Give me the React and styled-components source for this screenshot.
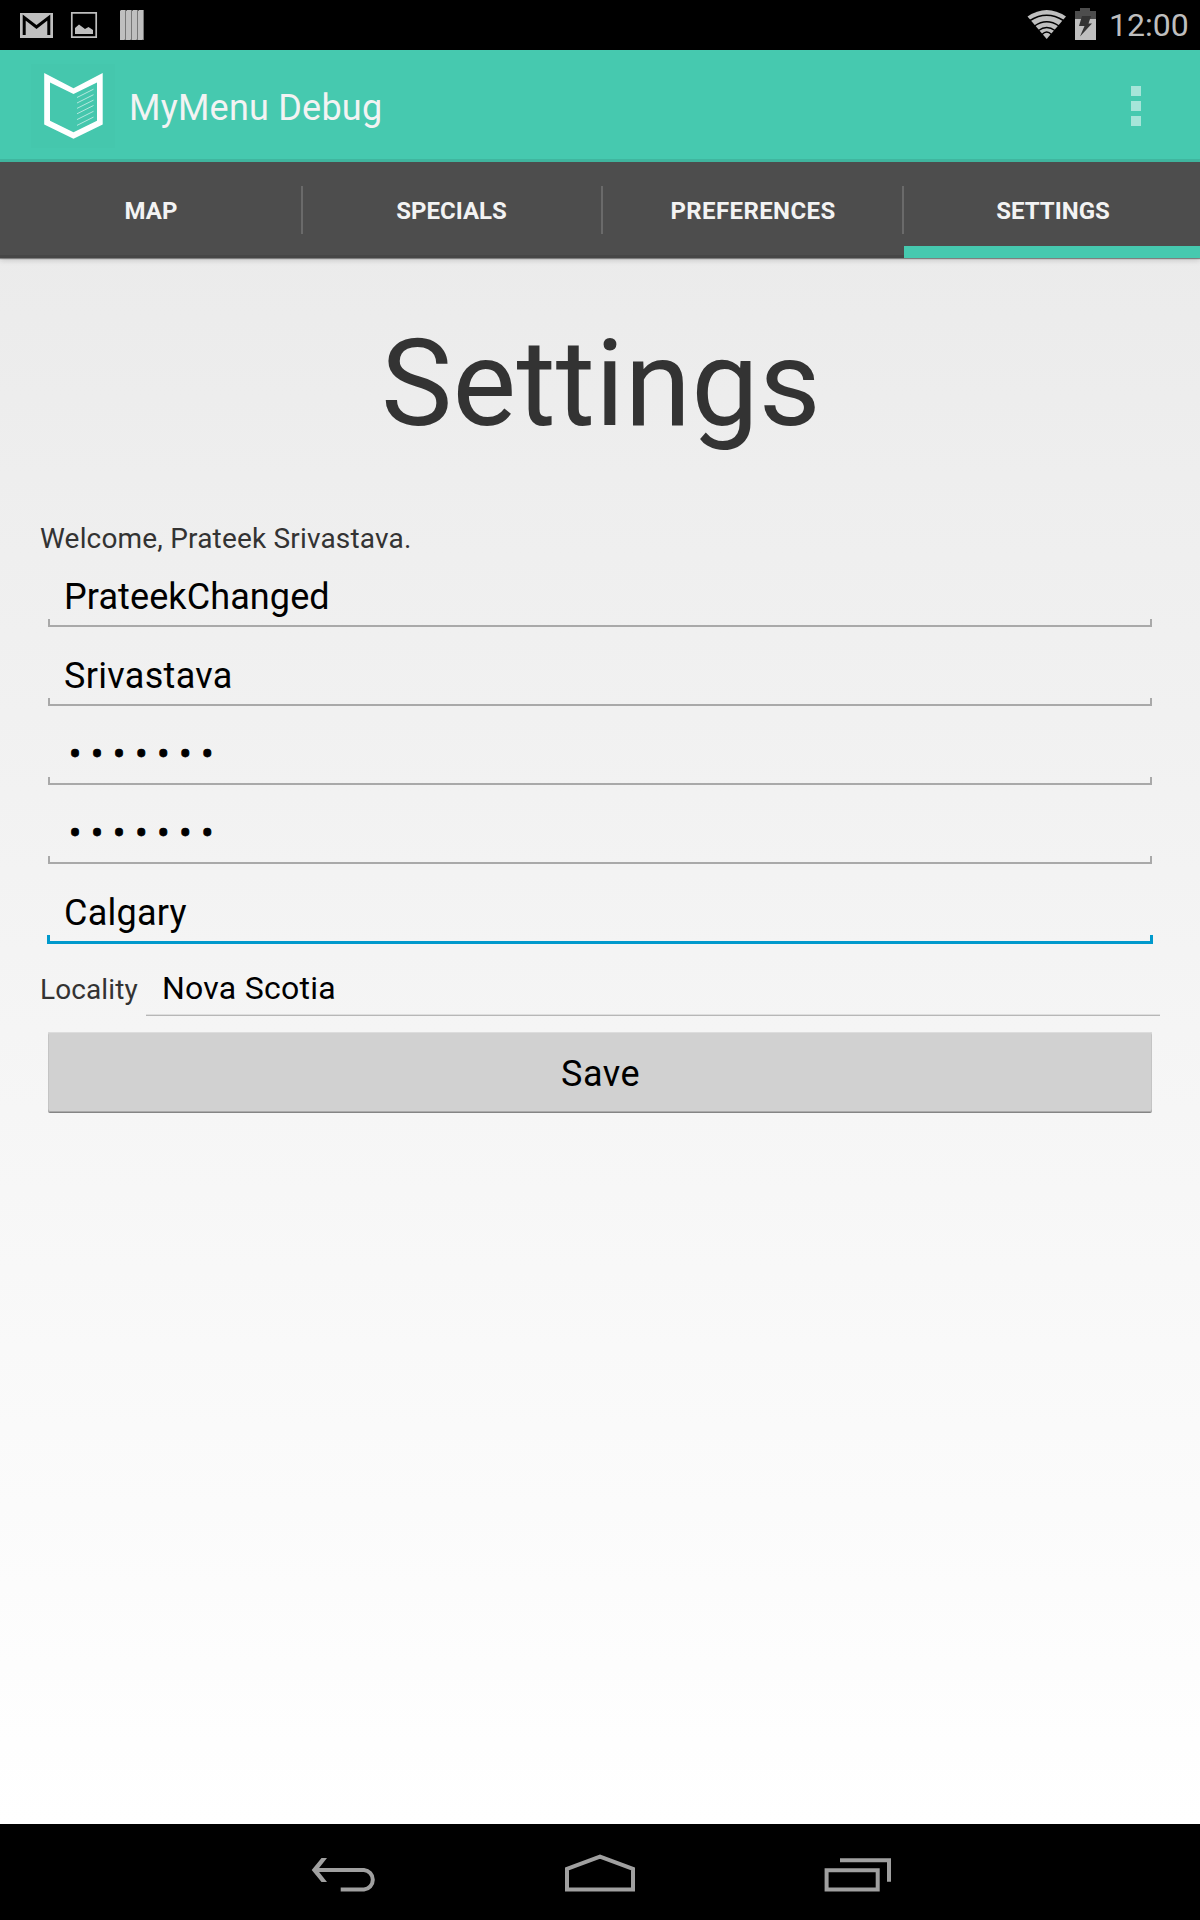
import React from "react";
import styled, { createGlobalStyle } from "styled-components";

const GlobalStyle = createGlobalStyle`
  * { box-sizing: border-box; }
  body { margin: 0; background: #000; }
`;

const Screen = styled.div`
  width: 1200px;
  height: 1920px;
  display: flex;
  flex-direction: column;
  overflow: hidden;
  font-family: Roboto, "Liberation Sans", sans-serif;
`;

const Window = styled.div`
  height: 1824px;
  display: flex;
  flex-direction: column;
  background: linear-gradient(#e8e8e8, #ffffff);
`;

const StatusBar = styled.div`
  flex: none;
  height: 50px;
  display: flex;
  justify-content: space-between;
  background: #000;
`;

const Clock = styled.span`
  width: 92px;
  margin-left: 8px;
  padding-left: 1px;
  font-size: 32px;
  line-height: 51px;
  color: #bebebe;
  white-space: nowrap;
`;

const StatusGroup = styled.div`
  display: flex;
`;

const ActionBar = styled.header`
  flex: none;
  height: 112px;
  display: flex;
  align-items: center;
  padding-left: 31px;
  background: #46c9af;
  border-bottom: 3px solid #40b69f;
`;

const AppLogo = styled.svg`
  flex: none;
  width: 84px;
  height: 84px;
  margin-top: 3px;
`;

const AppTitle = styled.h1`
  flex: 1;
  margin: 7px 0 0 14px;
  font-size: 36px;
  line-height: 42px;
  font-weight: 400;
  letter-spacing: 0.23px;
  color: #f3f3f3;
`;

const Overflow = styled.div`
  display: flex;
  flex-direction: column;
  gap: 5px;
  margin: 3px 59px 0 0;
`;

const Dot = styled.i`
  width: 10px;
  height: 10px;
  background: #a6e5d9;
`;

const Tabs = styled.nav`
  flex: none;
  position: relative;
  height: 96px;
  display: grid;
  grid-template-columns: 301px 301px 302px 296px;
  background: #4d4d4d;
  box-shadow: 0 1px 1px rgba(0, 0, 0, 0.4), 0 3px 5px rgba(0, 0, 0, 0.13);
`;

const Tab = styled.div`
  display: flex;
  align-items: center;
  justify-content: center;
  padding-left: ${(p) => p.$shift || 0}px;
  font-size: 24px;
  font-weight: 700;
  letter-spacing: ${(p) => p.$tracking || 0}px;
  color: #f3f3f3;
  white-space: nowrap;
  border-bottom: ${(p) => (p.$active ? "12px solid #46c9af" : "3px solid #464646")};
  padding-top: ${(p) => (p.$active ? 14 : 5)}px;
`;

const Divider = styled.i`
  position: absolute;
  top: 24px;
  left: ${(p) => p.$x}px;
  width: 2px;
  height: 48px;
  background: #6a6a6a;
`;

const Content = styled.main`
  display: flex;
  flex-direction: column;
  padding: 56px 40px 0;
`;

const Heading = styled.h2`
  margin: 0;
  padding-left: 2px;
  text-align: center;
  font-size: 120px;
  line-height: 141px;
  font-weight: 400;
  letter-spacing: 0.2px;
  color: #333;
`;

const Welcome = styled.p`
  margin: 67px 0 0;
  font-size: 28px;
  line-height: 33px;
  letter-spacing: 0.18px;
  color: #333;
`;

const Field = styled.div`
  height: 79px;
  padding: 64px ${(p) => (p.$focused ? 7 : 8)}px 0;
`;

const Value = styled.div`
  height: 42px;
  margin: -43px 0 0 ${(p) => (p.$focused ? 17 : 16)}px;
  font-size: 36px;
  line-height: 42px;
  letter-spacing: ${(p) => p.$tracking || 0}px;
  color: #000;
`;

const Secret = styled(Value)`
  padding-left: 5px;
  letter-spacing: 9.9px;
  -webkit-text-stroke: 0.8px #000;
`;

const Bracket = styled.div`
  margin-top: 1px;
  height: ${(p) => (p.$focused ? 9 : 8)}px;
  border: ${(p) => (p.$focused ? "3px solid #0099cc" : "2px solid #a9a9a9")};
  border-top: 0;
`;

const LocalityRow = styled.div`
  height: 66px;
  display: flex;
`;

const Label = styled.label`
  width: 106px;
  padding-top: 23px;
  font-size: 28px;
  line-height: 33px;
  letter-spacing: 0.1px;
  color: #333;
`;

const Spinner = styled.div`
  flex: 1;
  padding: 19px 0 0 16px;
  font-size: 32px;
  line-height: 38px;
  letter-spacing: 0.25px;
  color: #000;
  border-bottom: 1px solid #b7b7b7;
  box-shadow: inset 0 -1px 0 #dedede;
`;

const SaveButton = styled.button`
  height: 80px;
  margin: 16px 8px 0;
  padding: 4px 0 0 1px;
  border: 0;
  border-radius: 2px;
  background: #d1d1d1;
  box-shadow: inset 0 1px 0 #dddddd, inset 0 -1px 0 #aaa, inset 1px 0 0 #c4c4c4,
    inset -1px 0 0 #c4c4c4, 0 1px 0 #858585;
  font-family: inherit;
  font-size: 36px;
  line-height: 42px;
  letter-spacing: 0.5px;
  color: #000;
`;

const NavBar = styled.footer`
  height: 96px;
  display: flex;
  justify-content: center;
  gap: 174px;
  background: #000;
`;

const NotificationIcons = () => (
  <svg width="160" height="50">
    <rect x="20" y="13" width="33" height="25" fill="#bfbfbf" />
    <path d="M24.2 35V17.5L36.5 27L48.8 17.5V35" fill="none" stroke="#000" strokeWidth="3" />
    <path d="M71.8 12.8H96.2V37.2H71.8Z" fill="none" stroke="#bfbfbf" strokeWidth="1.7" />
    <path d="M75 34V28L79 24.5L85 29L88.5 27L93 30V34Z" fill="#bfbfbf" />
    {[120, 126, 132, 138].map((x) => (
      <g key={x}>
        <rect x={x + 1} y="10" width="5" height="30" fill="#777" />
        <path d={`M${x} 11L${x + 1} 10H${x + 5}V39L${x + 4} 40H${x}Z`} fill="#bfbfbf" />
      </g>
    ))}
  </svg>
);

const SystemIcons = () => (
  <svg width="76" height="50">
    <path d="M3.5 16.5Q22.7 3.5 42 16.5L22.7 39Z" fill="#bfbfbf" />
    <g fill="none" stroke="#000" strokeWidth="1.5">
      <path d="M6 20.5Q22.7 10 39.5 20.5" />
      <path d="M10.5 26Q22.7 17.5 35 26" />
      <path d="M14.5 30.5Q22.7 24.5 31 30.5" />
      <path d="M18 34.5Q22.7 29.5 27.5 34.5" />
    </g>
    <path d="M51 11H56V8H66V11H72V20H51Z" fill="#4d4d4d" />
    <path d="M51 19H72V40H51Z" fill="#bfbfbf" />
    <path d="M58 16H67L64.5 23.5H68L56 36.5L60.5 26H55Z" fill="#333" />
  </svg>
);

const Logo = () => (
  <AppLogo viewBox="0 0 84 84">
    <rect width="84" height="84" fill="#45c7ad" />
    <path
      d="M13.2 9L42.5 24.3L71.7 9V60.5L42.5 74.8L13.2 60.5ZM19 18.5V56.7L42.5 68.2L66 56.7V18.5L42.5 30Z"
      fill="#fff"
      fillRule="evenodd"
    />
    <path
      d="M46 33.5L62.5 25.2M46 39L62.5 30.7M46 44.4L62.5 36.1M46 49.8L62.5 41.5M46 55.6L62.5 47.3M46 61.4L62.5 53.1"
      stroke="#b3e8de"
      strokeWidth="1"
    />
  </AppLogo>
);

const BackIcon = () => (
  <svg width="84" height="96" fill="none">
    <path d="M16 46H64A9.8 9.8 0 0 1 64 65.5H40.7" stroke="#a0a0a0" strokeWidth="4" />
    <path d="M11.7 46L21.5 34H27L17.5 46L27 58H21.5Z" fill="#a0a0a0" />
  </svg>
);

const HomeIcon = () => (
  <svg width="84" height="96" fill="none">
    <path d="M9 65.5V44.8L42 32.6L75 44.8V65.5Z" stroke="#a0a0a0" strokeWidth="4" />
  </svg>
);

const RecentsIcon = () => (
  <svg width="84" height="96" fill="none" stroke="#a0a0a0" strokeWidth="4">
    <path d="M10.6 46.3H61.7V65.5H10.6Z" />
    <path d="M24 36.3H73V57.7" />
  </svg>
);

const DIVIDERS = [301, 601, 902];

const FIELDS = [
  { value: "PrateekChanged", tracking: 0.1 },
  { value: "Srivastava", tracking: 0.32 },
  { value: "•••••••", secret: true },
  { value: "•••••••", secret: true },
  { value: "Calgary", tracking: 0.25, focused: true },
];

export default function App() {
  return (
    <Screen>
      <GlobalStyle />
      <Window>
        <StatusBar>
          <NotificationIcons />
          <StatusGroup>
            <SystemIcons />
            <Clock>12:00</Clock>
          </StatusGroup>
        </StatusBar>
        <ActionBar>
          <Logo />
          <AppTitle>MyMenu Debug</AppTitle>
          <Overflow>
            <Dot />
            <Dot />
            <Dot />
          </Overflow>
        </ActionBar>
        <Tabs>
          <Tab $shift={1}>MAP</Tab>
          <Tab>SPECIALS</Tab>
          <Tab $tracking={0.4}>PREFERENCES</Tab>
          <Tab $active $shift={2}>SETTINGS</Tab>
          {DIVIDERS.map((x) => (
            <Divider key={x} $x={x} />
          ))}
        </Tabs>
        <Content>
          <Heading>Settings</Heading>
          <Welcome>Welcome, Prateek Srivastava.</Welcome>
          {FIELDS.map((f, i) => {
            const Text = f.secret ? Secret : Value;
            return (
              <Field key={i} $focused={f.focused}>
                <Text $focused={f.focused} $tracking={f.tracking}>{f.value}</Text>
                <Bracket $focused={f.focused} />
              </Field>
            );
          })}
          <LocalityRow>
            <Label>Locality</Label>
            <Spinner>Nova Scotia</Spinner>
          </LocalityRow>
          <SaveButton>Save</SaveButton>
        </Content>
      </Window>
      <NavBar>
        <BackIcon />
        <HomeIcon />
        <RecentsIcon />
      </NavBar>
    </Screen>
  );
}
